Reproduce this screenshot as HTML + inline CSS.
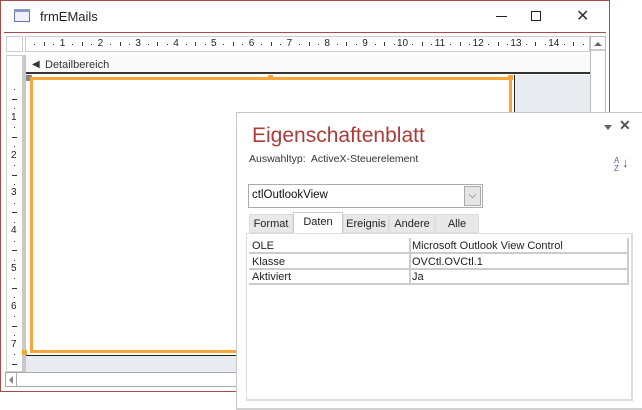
<!DOCTYPE html>
<html><head><style>
*{margin:0;padding:0;box-sizing:border-box}
html,body{width:642px;height:410px;overflow:hidden}
body{background:#fff;position:relative;font-family:"Liberation Sans",sans-serif;font-size:11px;color:#222}
.a{position:absolute}
.n{position:absolute;font-size:10px;line-height:12px;color:#222}
.d{position:absolute;width:1px;height:1px;background:#333}
.b{position:absolute;background:#333}
</style></head><body>
<div class="a" style="left:0;top:0;width:610px;height:392px;border:1px solid #a84a4a;background:#fff"></div>
<div class="a" style="left:4px;top:32px;width:602px;height:1px;background:#a84a4a"></div>
<div class="a" style="left:14px;top:9px;width:16px;height:13px;border:1px solid #6a76a8;background:#eef0f8"></div>
<div class="a" style="left:14px;top:9px;width:16px;height:3px;background:#8a94c0"></div>
<div class="a" style="left:40px;top:9px;font-size:13px;color:#222">frmEMails</div>
<div class="a" style="left:496px;top:16px;width:11px;height:1px;background:#222"></div>
<div class="a" style="left:531px;top:11px;width:10px;height:10px;border:1px solid #222"></div>
<div class="a" style="left:576px;top:6px;font-size:16px;color:#333">✕</div>
<div class="a" style="left:6px;top:36px;width:17px;height:16px;border:1px solid #ccc"></div>
<div id="hr" class="a" style="left:25px;top:36px;width:565px;height:16px;border:1px solid #ccc;background:#fff;overflow:hidden"></div>
<div class="a" style="left:590px;top:36px;width:16px;height:334px;border:1px solid #bbb;background:#fff"></div>
<div class="a" style="left:594px;top:42px;width:0;height:0;border-left:4px solid transparent;border-right:4px solid transparent;border-bottom:4px solid #666"></div>
<div class="a" style="left:591px;top:49px;width:14px;height:2px;background:#ccc"></div>
<div id="vr" class="a" style="left:6px;top:55px;width:17px;height:317px;border:1px solid #ccc;background:#fff;overflow:hidden"></div>
<div class="a" style="left:23px;top:55px;width:3px;height:317px;background:#c8c8c8"></div>
<div class="a" style="left:26px;top:55px;width:564px;height:19px;background:#fafafa;border-bottom:2px solid #333"></div>
<div class="a" style="left:32px;top:59px;font-size:10px;color:#333">◀</div>
<div class="a" style="left:45px;top:59px;font-size:11px;color:#333">Detailbereich</div>
<div class="a" style="left:26px;top:75px;width:564px;height:297px;background:#fff"></div>
<div class="a" style="left:514px;top:75px;width:76px;height:280px;background:#e8ebf0;border-left:1px solid #222"></div>
<div class="a" style="left:26px;top:355px;width:564px;height:17px;background:#e8ebf0;border-top:1px solid #222"></div>
<div class="a" style="left:26px;top:75px;width:6px;height:6px;background:#888"></div>
<div class="a" style="left:30px;top:77px;width:482px;height:276px;border:3px solid #f8a63c"></div>
<div class="a" style="left:268px;top:75px;width:5px;height:5px;background:#f8a63c"></div>
<div class="a" style="left:508px;top:75px;width:5px;height:5px;background:#f8a63c"></div>
<div class="a" style="left:22px;top:350px;width:5px;height:5px;background:#f8a63c"></div>
<div class="a" style="left:5px;top:372px;width:600px;height:15px;border:1px solid #aaa;background:#fff"></div>
<div class="a" style="left:6px;top:373px;width:11px;height:13px;border-right:1px solid #aaa"></div>
<div class="a" style="left:9px;top:376px;width:0;height:0;border-top:4px solid transparent;border-bottom:4px solid transparent;border-right:4px solid #888"></div>
<!-- property sheet -->
<div class="a" style="left:236px;top:112px;width:406px;height:298px;background:#fff;border:1px solid #c6c6c6;border-right:none;border-bottom:2px solid #d0d0d0"></div>
<div class="a" style="left:252px;top:124px;font-size:21px;color:#b03a3a">Eigenschaftenblatt</div>
<div class="a" style="left:249px;top:153px;font-size:10.5px;color:#333">Auswahltyp:&nbsp; ActiveX-Steuerelement</div>
<div class="a" style="left:604px;top:125px;width:0;height:0;border-left:4px solid transparent;border-right:4px solid transparent;border-top:5px solid #666"></div>
<div class="a" style="left:619px;top:117px;font-size:14px;color:#555;font-weight:bold">✕</div>
<div class="a" style="left:614px;top:157px;font-size:8px;line-height:8px;color:#7050a0">A<br>Z</div>
<div class="a" style="left:622px;top:155px;font-size:13px;color:#555">↓</div>
<div class="a" style="left:248px;top:184px;width:235px;height:24px;border:1px solid #aaa;background:#fff"></div>
<div class="a" style="left:252px;top:189px;font-size:11.5px;color:#111">ctlOutlookView</div>
<div class="a" style="left:464px;top:186px;width:17px;height:20px;border:1px solid #aaa;background:#e6e6e6;text-align:center;font-size:10px;line-height:18px;color:#555">⌵</div>
<div class="a" style="left:249px;top:214px;width:230px;height:19px;background:#e8e8e8"></div>
<div class="a" style="left:249px;top:214px;width:44px;height:19px;border:1px solid #ddd;font-size:11px;line-height:18px;text-align:center">Format</div>
<div class="a" style="left:293px;top:212px;width:50px;height:22px;background:#fff;border:1px solid #ccc;border-bottom:none;font-size:11px;line-height:18px;text-align:center">Daten</div>
<div class="a" style="left:343px;top:214px;width:46px;height:19px;border:1px solid #ddd;font-size:11px;line-height:18px;text-align:center">Ereignis</div>
<div class="a" style="left:389px;top:214px;width:46px;height:19px;border:1px solid #ddd;font-size:11px;line-height:18px;text-align:center">Andere</div>
<div class="a" style="left:435px;top:214px;width:44px;height:19px;border:1px solid #ddd;font-size:11px;line-height:18px;text-align:center">Alle</div>
<div class="a" style="left:246px;top:233px;width:387px;height:168px;border:1px solid #ddd;border-bottom:2px solid #ddd;border-right:2px solid #ddd;background:#fff"></div>
<div class="a" style="left:249px;top:238px;width:380px;height:47px;border-bottom:2px solid #ccc"></div>
<div class="a" style="left:249px;top:252px;width:380px;height:2px;background:#ccc"></div>
<div class="a" style="left:249px;top:268px;width:380px;height:2px;background:#ccc"></div>
<div class="a" style="left:409px;top:238px;width:2px;height:47px;background:#ccc"></div>
<div class="a" style="left:627px;top:238px;width:2px;height:47px;background:#ccc"></div>
<div class="a" style="left:252px;top:240px;font-size:11px">OLE</div>
<div class="a" style="left:252px;top:256px;font-size:11px">Klasse</div>
<div class="a" style="left:252px;top:271px;font-size:11px">Aktiviert</div>
<div class="a" style="left:412px;top:240px;font-size:11px">Microsoft Outlook View Control</div>
<div class="a" style="left:412px;top:256px;font-size:11px">OVCtl.OVCtl.1</div>
<div class="a" style="left:412px;top:271px;font-size:11px">Ja</div>
<script>
var s=37.8,h='',v='';
for(var n=0;n<15;n++){var x=n*s-1;
 if(n>0)h+='<div class="n" style="left:'+(x-(n>9?6:3))+'px;top:1px">'+n+'</div>';
 h+='<div class="d" style="left:'+(x+s/4)+'px;top:7px"></div><div class="b" style="left:'+(x+s/2)+'px;top:5px;width:1px;height:4px"></div><div class="d" style="left:'+(x+3*s/4)+'px;top:7px"></div>';
 var y=24+n*s;
 if(n>0&&y<310)v+='<div class="n" style="left:4px;top:'+(y-6)+'px">'+n+'</div>';
 if(y<310)v+='<div class="d" style="left:7px;top:'+(y+s/4)+'px"></div><div class="b" style="left:5px;top:'+(y+s/2)+'px;width:5px;height:1px"></div><div class="d" style="left:7px;top:'+(y+3*s/4)+'px"></div>';
}
document.getElementById('hr').innerHTML=h;document.getElementById('vr').innerHTML=v;
</script>
</body></html>
